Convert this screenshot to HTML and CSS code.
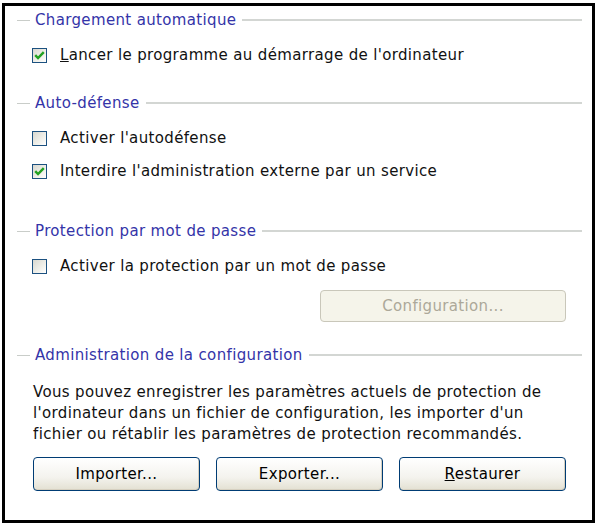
FILE: index.html
```html
<!DOCTYPE html>
<html lang="fr">
<head>
    <meta charset="UTF-8">
    <title>Paramètres</title>
    <link rel="stylesheet" href="styles.css">
</head>
<body>
    <div class="panel">
        <div class="group-title"><span class="dash"></span><span class="title-text">Chargement automatique</span><span class="line"></span></div>
        <label class="check-row first">
            <span class="box checked"><svg viewBox="0 0 9 9" width="11" height="11"><path d="M1 4.2 L3.3 6.6 L8 1.8" fill="none" stroke="#21a121" stroke-width="2"/></svg></span>
            <span><u>L</u>ancer le programme au démarrage de l'ordinateur</span>
        </label>

        <div class="group-title g2"><span class="dash"></span><span class="title-text">Auto-défense</span><span class="line"></span></div>
        <label class="check-row first">
            <span class="box"></span>
            <span>Activer l'autodéfense</span>
        </label>
        <label class="check-row second">
            <span class="box checked"><svg viewBox="0 0 9 9" width="11" height="11"><path d="M1 4.2 L3.3 6.6 L8 1.8" fill="none" stroke="#21a121" stroke-width="2"/></svg></span>
            <span>Interdire l'administration externe par un service</span>
        </label>

        <div class="group-title g3"><span class="dash"></span><span class="title-text">Protection par mot de passe</span><span class="line"></span></div>
        <label class="check-row first">
            <span class="box"></span>
            <span>Activer la protection par un mot de passe</span>
        </label>
        <div class="config-row">
            <button class="btn disabled" disabled>Configuration...</button>
        </div>

        <div class="group-title g4"><span class="dash"></span><span class="title-text">Administration de la configuration</span><span class="line"></span></div>
        <p class="info">Vous pouvez enregistrer les paramètres actuels de protection de l'ordinateur dans un fichier de configuration, les importer d'un fichier ou rétablir les paramètres de protection recommandés.</p>
        <div class="button-row">
            <button class="btn">Importer...</button>
            <button class="btn">Exporter...</button>
            <button class="btn"><u>R</u>estaurer</button>
        </div>
    </div>
</body>
</html>
```

FILE: styles.css
```css
body {
    margin: 0;
    background-color: #fff;
    font-family: 'DejaVu Sans', Verdana, sans-serif;
    font-size: 15px;
    letter-spacing: 0.35px;
    color: #111;
}
.panel {
    box-sizing: border-box;
    width: 593px;
    height: 520px;
    margin: 3px 0 0 2px;
    border: 3px solid #000;
    padding: 5px 10px 0 12px;
}
.group-title {
    display: flex;
    align-items: center;
    height: 18px;
    color: #3434a8;
}
.group-title .dash {
    width: 13px;
    height: 1px;
    background-color: #c9cdc9;
}
.group-title .title-text {
    margin: 0 6px 0 5px;
    white-space: nowrap;
}
.group-title .line {
    flex: 1;
    height: 2px;
    background-color: #d3d6d3;
}
.g2 {
    margin-top: 29px;
}
.g3 {
    margin-top: 41px;
}
.g4 {
    margin-top: 24px;
}
.check-row {
    display: flex;
    align-items: center;
    height: 20px;
    padding-left: 15px;
}
.check-row.first {
    margin-top: 16px;
}
.check-row.second {
    margin-top: 13px;
}
.box {
    box-sizing: border-box;
    width: 15px;
    height: 15px;
    margin-right: 13px;
    border: 1px solid #1c5180;
    background: linear-gradient(135deg, #d8d8d0 0%, #f0f0ea 60%, #fff 100%);
    display: flex;
    align-items: center;
    justify-content: center;
}
.config-row {
    display: flex;
    justify-content: flex-end;
    margin-top: 14px;
    padding-right: 16px;
}
.btn {
    box-sizing: border-box;
    width: 167px;
    height: 34px;
    font-family: 'DejaVu Sans', Verdana, sans-serif;
    font-size: 15px;
    letter-spacing: 0.35px;
    color: #000;
    border: 1px solid #003c74;
    border-radius: 4px;
    background: linear-gradient(#ffffff 0%, #f4f3ee 60%, #e3e0d2 100%);
    box-shadow: inset -1px -1px 0 #d6d0c0;
    padding: 0;
}
.btn.disabled {
    width: 246px;
    height: 32px;
    color: #aca899;
    border-color: #c9c7ba;
    background: #f5f4ea;
    box-shadow: none;
}
.info {
    margin: 18px 0 0 16px;
    line-height: 21px;
    width: 530px;
}
.button-row {
    display: flex;
    gap: 16px;
    margin-top: 12px;
    padding-left: 16px;
}
```
